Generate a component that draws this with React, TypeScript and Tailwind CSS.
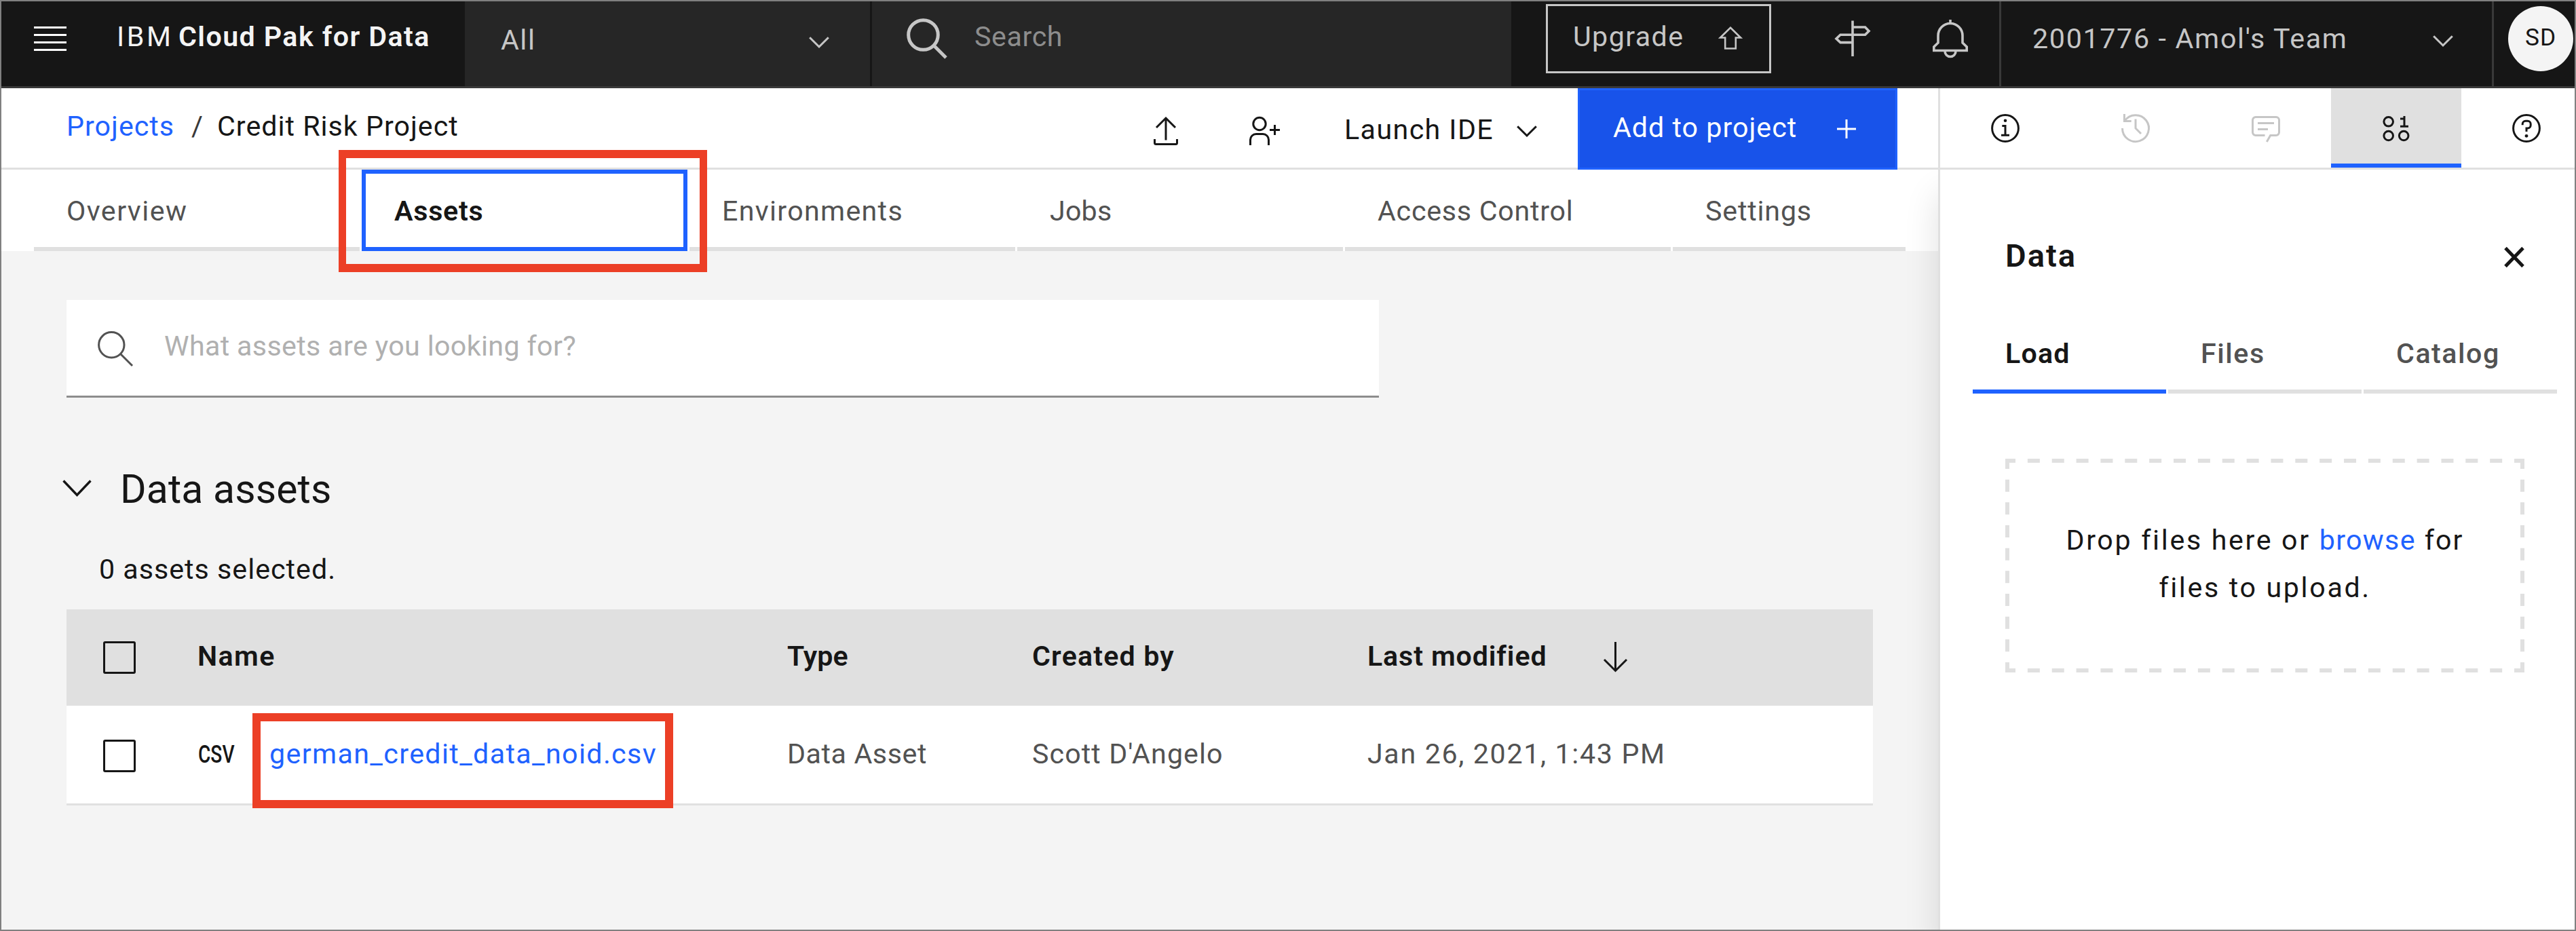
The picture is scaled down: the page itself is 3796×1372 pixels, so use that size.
import type { ReactNode } from 'react'

type IconProps = { w: number; h: number; sw?: number; className?: string; children: ReactNode }

function Icon({ w, h, sw = 3, className = '', children }: IconProps) {
  return (
    <svg
      width={w}
      height={h}
      viewBox={`0 0 ${w} ${h}`}
      fill="none"
      stroke="currentColor"
      strokeWidth={sw}
      className={`shrink-0 overflow-visible ${className}`}
    >
      {children}
    </svg>
  )
}

const Chevron = ({ className = '' }: { className?: string }) => (
  <Icon w={30} h={17} className={className}>
    <path d="M1.2 1.2 15 15 28.8 1.2" />
  </Icon>
)

function TopBar() {
  return (
    <header className="flex h-[130px] shrink-0 items-start border-b-3 border-[#393939] bg-[#161616] text-[#c6c6c6]">
      <div className="flex h-[127px] w-[685px] shrink-0 items-start pl-[50px] text-[#f4f4f4]">
        <Icon w={48} h={36} className="mt-[39px] text-white">
          <path d="M0 1.5h48M0 12.5h48M0 23.5h48M0 34.5h48" />
        </Icon>
        <span className="mt-[30px] ml-[74px] w-[91px] tracking-[3.6px]">IBM</span>
        <span className="mt-[30px] font-semibold tracking-[1.4px]">Cloud Pak for Data</span>
      </div>
      <div className="flex h-[127px] w-[600px] shrink-0 items-start justify-between border-r-3 border-[#161616] bg-[#262626] pr-[60px] pl-[53px]">
        <span className="mt-[35px] tracking-[1.5px]">All</span>
        <Chevron className="mt-[54px]" />
      </div>
      <div className="flex h-[127px] w-[942px] shrink-0 items-start bg-[#262626] pl-[51px]">
        <Icon w={60} h={60} sw={5} className="mt-[27px]">
          <circle cx="24.5" cy="24.5" r="21.8" />
          <path d="M40 40 58 58" />
        </Icon>
        <span className="mt-[30px] ml-[40px] tracking-[0.6px] text-[#8d8d8d]">Search</span>
      </div>
      <button className="mt-[6px] ml-[51px] flex h-[102px] w-[332px] shrink-0 items-start justify-between border-3 border-[#c6c6c6] pr-[40px] pl-[37px]">
        <span className="mt-[21px] tracking-[1.4px]">Upgrade</span>
        <Icon w={34} h={34} sw={2.6} className="mt-[30px]">
          <path d="M17 1.8 32 16.5H24.8V32.5H9.2V16.5H2Z" />
        </Icon>
      </button>
      <Icon w={52} h={54} sw={3.6} className="mt-[30px] ml-[94px]">
        <path d="M26 .5V53M26 10H44.5L50 15.7 44.5 21.3H8L2 27 8 32.6H26" />
      </Icon>
      <Icon w={52} h={58} sw={3.6} className="mt-[29px] ml-[92px]">
        <path d="M26 0V5.5M8 23.5a18 18 0 0 1 36 0V34L50.2 40V45.5H1.8V40L8 34ZM18 46.5a8 8 0 0 0 16 0" />
      </Icon>
      <div className="ml-[46px] flex h-[127px] w-[729px] shrink-0 items-start justify-between border-x-3 border-[#393939] pr-[57px] pl-[46px]">
        <span className="mt-[33px] tracking-[1.67px]">2001776 - Amol's Team</span>
        <Chevron className="mt-[52px]" />
      </div>
      <div className="mt-[9px] ml-[21px] flex h-[96px] w-[96px] shrink-0 justify-center rounded-full bg-[#f4f4f4] pt-[26px] text-[35.3px] leading-[40px] tracking-[1px] text-[#161616]">
        SD
      </div>
    </header>
  )
}

function ProjectBar() {
  return (
    <div className="relative z-10 flex h-[120px] shrink-0 items-start border-b-3 border-[#e0e0e0] bg-white pl-[98px]">
      <nav className="flex pt-[32px] tracking-[1px]">
        <a className="w-[184px] text-[#1f62ff]">Projects</a>
        <span className="w-[38px] text-[#393939]">/</span>
        <span>Credit Risk Project</span>
      </nav>
      <div className="mr-[60px] ml-auto flex items-start">
        <Icon w={36} h={42} className="mt-[42px]">
          <path d="M18 2V34.5M4 16 18 2 32 16M1.5 33v5.5q0 2 2 2h29q2 0 2-2V33" />
        </Icon>
        <Icon w={45} h={42} className="mt-[42px] ml-[105px]">
          <circle cx="15" cy="10.5" r="9.2" />
          <path d="M1.5 42V34a8.5 8.5 0 0 1 8.5-8.5h10a8.5 8.5 0 0 1 8.5 8.5v8M30 19.4H45M37.5 12V27" />
        </Icon>
        <span className="mt-[37px] ml-[95px] w-[254px] tracking-[1.4px]">Launch IDE</span>
        <Chevron className="mt-[55px] mr-[60px]" />
        <button className="flex h-[120px] w-[471px] items-start justify-between border-3 border-[#1f62ff] bg-[#1853ea] pr-[58px] pl-[49px] text-white">
          <span className="mt-[31px] tracking-[1px]">Add to project</span>
          <Icon w={28} h={28} className="mt-[43px]">
            <path d="M14 0V28M0 14H28" />
          </Icon>
        </button>
      </div>
    </div>
  )
}

function Tabs() {
  const tab = 'h-[120px] w-[480px] shrink-0 border-b-6 border-[#e0e0e0] pt-[37px] pl-[48px]'
  return (
    <div className="flex h-[120px] shrink-0 gap-[3px] bg-white pl-[50px] text-[#525252]">
      <div className={`${tab} tracking-[1.42px]`}>Overview</div>
      <div className="relative h-[120px] w-[480px] shrink-0 border-6 border-[#1f62ff] pt-[31px] pl-[42px] font-semibold tracking-[0.75px] text-[#161616]">
        Assets
        <div className="absolute -top-[35px] -left-[40px] z-20 h-[180px] w-[543px] border-x-11 border-y-12 border-[#ec3f26]" />
      </div>
      <div className={`${tab} tracking-[1.3px]`}>Environments</div>
      <div className={`${tab} tracking-[0.2px]`}>Jobs</div>
      <div className={`${tab} tracking-[0.74px]`}>Access Control</div>
      <div className="h-[120px] w-[343px] shrink-0 border-b-6 border-[#e0e0e0] pt-[37px] pl-[48px] tracking-[0.82px]">
        Settings
      </div>
    </div>
  )
}

const Checkbox = ({ className }: { className: string }) => (
  <span className={`h-[48px] w-[48px] rounded-[3px] border-3 border-[#161616] ${className}`} />
)

function AssetTable() {
  const cols = 'grid grid-cols-[54px_139px_869px_361px_494px_745px] items-start'
  return (
    <div className="mt-[35px] w-[2662px]">
      <div className={`${cols} h-[142px] bg-[#e0e0e0] font-semibold`}>
        <span />
        <Checkbox className="mt-[47px]" />
        <span className="mt-[45px] tracking-[1.38px]">Name</span>
        <span className="mt-[45px]">Type</span>
        <span className="mt-[45px] tracking-[1.15px]">Created by</span>
        <span className="flex items-start">
          <span className="mt-[45px] w-[347px] tracking-[0.86px]">Last modified</span>
          <Icon w={37} h={45} className="mt-[48px]">
            <path d="M18.5 0V43M2 26 18.5 42.5 35 26" />
          </Icon>
        </span>
      </div>
      <div className={`${cols} h-[147px] border-b-3 border-[#e0e0e0] bg-white text-[#525252]`}>
        <span />
        <Checkbox className="mt-[50px]" />
        <span className="flex items-start">
          <span className="mt-[48px] ml-[1px] w-[105px] origin-left scale-x-[.76] text-[37px] font-medium text-[#161616]">
            CSV
          </span>
          <a className="relative mt-[47px] tracking-[1.36px] text-[#1f62ff]">
            german_credit_data_noid.csv
            <span className="absolute -top-[36px] -left-[25px] h-[140px] w-[620px] border-12 border-[#ec3f26]" />
          </a>
        </span>
        <span className="mt-[47px] tracking-[0.57px]">Data Asset</span>
        <span className="mt-[47px] tracking-[1.08px]">Scott D'Angelo</span>
        <span className="mt-[47px] tracking-[1.64px]">Jan 26, 2021, 1:43 PM</span>
      </div>
    </div>
  )
}

function AssetsPage() {
  return (
    <main className="flex-1 bg-[#f4f4f4] pt-[72px] pl-[98px]">
      <div className="flex h-[144px] w-[1934px] items-start border-b-3 border-[#8d8d8d] bg-white pl-[46px]">
        <Icon w={52} h={52} className="mt-[46px] text-[#525252]">
          <circle cx="20.3" cy="20.3" r="18.7" />
          <path d="M33.5 33.5 51 51" />
        </Icon>
        <span className="mt-[44px] ml-[46px] tracking-[0.35px] text-[#b0b0b0]">What assets are you looking for?</span>
      </div>
      <div className="mt-[99px] -ml-[6px] flex items-start">
        <Icon w={43} h={25} sw={3.4} className="mt-[22px]">
          <path d="M1.5 1.5 21.5 22.5 41.5 1.5" />
        </Icon>
        <h2 className="ml-[42px] text-[58.9px] leading-[72px] tracking-[0.1px]">Data assets</h2>
      </div>
      <p className="mt-[58px] ml-[48px] tracking-[1px]">0 assets selected.</p>
      <AssetTable />
    </main>
  )
}

function DataPanel() {
  const cell = 'flex h-[117px] w-[192px] shrink-0 justify-center pt-[38px]'
  const tab = 'h-[83px] w-[285px] border-b-6 pl-[48px]'
  return (
    <aside className="flex w-[940px] shrink-0 flex-col">
      <div className="relative z-10 flex h-[120px] shrink-0 overflow-hidden border-b-3 border-l-3 border-[#e0e0e0] bg-white">
        <div className={cell}>
          <Icon w={42} h={42}>
            <circle cx="21" cy="21" r="19.4" />
            <circle cx="21" cy="9.7" r="2.3" fill="currentColor" stroke="none" />
            <path d="M16.3 17.5H21V31.3M15 31.3H27" />
          </Icon>
        </div>
        <div className={`${cell} text-[#c6c6c6]`}>
          <Icon w={42} h={42}>
            <path d="M1.5 21A19.5 19.5 0 1 0 5 10M4.4 0V10.5H14.7M21 7.5V21L29 29" />
          </Icon>
        </div>
        <div className={`${cell} text-[#c6c6c6]`}>
          <Icon w={42} h={42}>
            <path d="M19.5 31.4H6a4.5 4.5 0 0 1-4.5-4.5V9A4.5 4.5 0 0 1 6 4.5H36A4.5 4.5 0 0 1 40.5 9V26.9a4.5 4.5 0 0 1-4.5 4.5H27.7L22.3 41M9 13.4H33M9 22.4H24" />
          </Icon>
        </div>
        <div className={`${cell} border-b-6 border-[#1f62ff] bg-[#e0e0e0]`}>
          <Icon w={42} h={42}>
            <circle cx="9.7" cy="11.3" r="6.8" />
            <circle cx="9.7" cy="32" r="6.8" />
            <circle cx="32.2" cy="32" r="6.8" />
            <path d="M27 7H33M33 3V18M27 18.2H39" />
          </Icon>
        </div>
        <div className={cell}>
          <Icon w={42} h={42}>
            <circle cx="21" cy="21" r="19.4" />
            <path d="M15.2 16.3V14.7a4.5 4.5 0 0 1 4.5-4.5h3a4.5 4.5 0 0 1 4.5 4.5v1.7a4.5 4.5 0 0 1-4.5 4.5H21V26" />
            <circle cx="21" cy="32.3" r="2.4" fill="currentColor" stroke="none" />
          </Icon>
        </div>
      </div>
      <div className="flex-1 border-l-3 border-[#e0e0e0] bg-white pt-[99px] shadow-[0_36px_48px_rgba(0,0,0,0.12)]">
        <div className="flex items-start justify-between pr-[76px] pl-[96px]">
          <h3 className="text-[47.1px] leading-[56px] font-semibold tracking-[2px]">Data</h3>
          <Icon w={30} h={30} sw={5} className="mt-[15px]">
            <path d="M2 1.5 28 28.5M28 1.5 2 28.5" />
          </Icon>
        </div>
        <div className="mt-[92px] ml-[48px] flex gap-[3px] text-[#525252]">
          <div className={`${tab} border-[#1f62ff] font-semibold tracking-[1.2px] text-[#161616]`}>Load</div>
          <div className={`${tab} border-[#e0e0e0] font-medium tracking-[1.55px]`}>Files</div>
          <div className={`${tab} border-[#e0e0e0] font-medium tracking-[1.5px]`}>Catalog</div>
        </div>
        <div className="relative mt-[96px] ml-[96px] h-[315px] w-[765px] pt-[85px] text-center leading-[70px]">
          <svg
            width="765"
            height="315"
            fill="none"
            stroke="#e0e0e0"
            strokeWidth="6"
            className="absolute inset-0"
          >
            <path d="M0 3H765M0 312H765" strokeDasharray="18 17.86" strokeDashoffset="3" />
            <path d="M3 0V315M762 0V315" strokeDasharray="18 15.67" strokeDashoffset="3" />
          </svg>
          <p className="relative tracking-[2.65px]">
            Drop files here or <a className="tracking-[1.31px] text-[#1f62ff]">browse</a>{' '}
            <span className="tracking-[2px]">for</span>
            <br />
            files to upload.
          </p>
        </div>
      </div>
    </aside>
  )
}

export default function App() {
  return (
    <div className="relative flex h-[1372px] w-[3796px] flex-col overflow-hidden bg-white font-['Roboto',sans-serif] text-[41.2px] leading-[48px] whitespace-nowrap text-[#161616]">
      <TopBar />
      <div className="flex flex-1">
        <div className="flex w-[2856px] shrink-0 flex-col">
          <ProjectBar />
          <Tabs />
          <AssetsPage />
        </div>
        <DataPanel />
      </div>
      <div className="pointer-events-none absolute inset-0 z-30 border-2 border-[#808080]" />
    </div>
  )
}
